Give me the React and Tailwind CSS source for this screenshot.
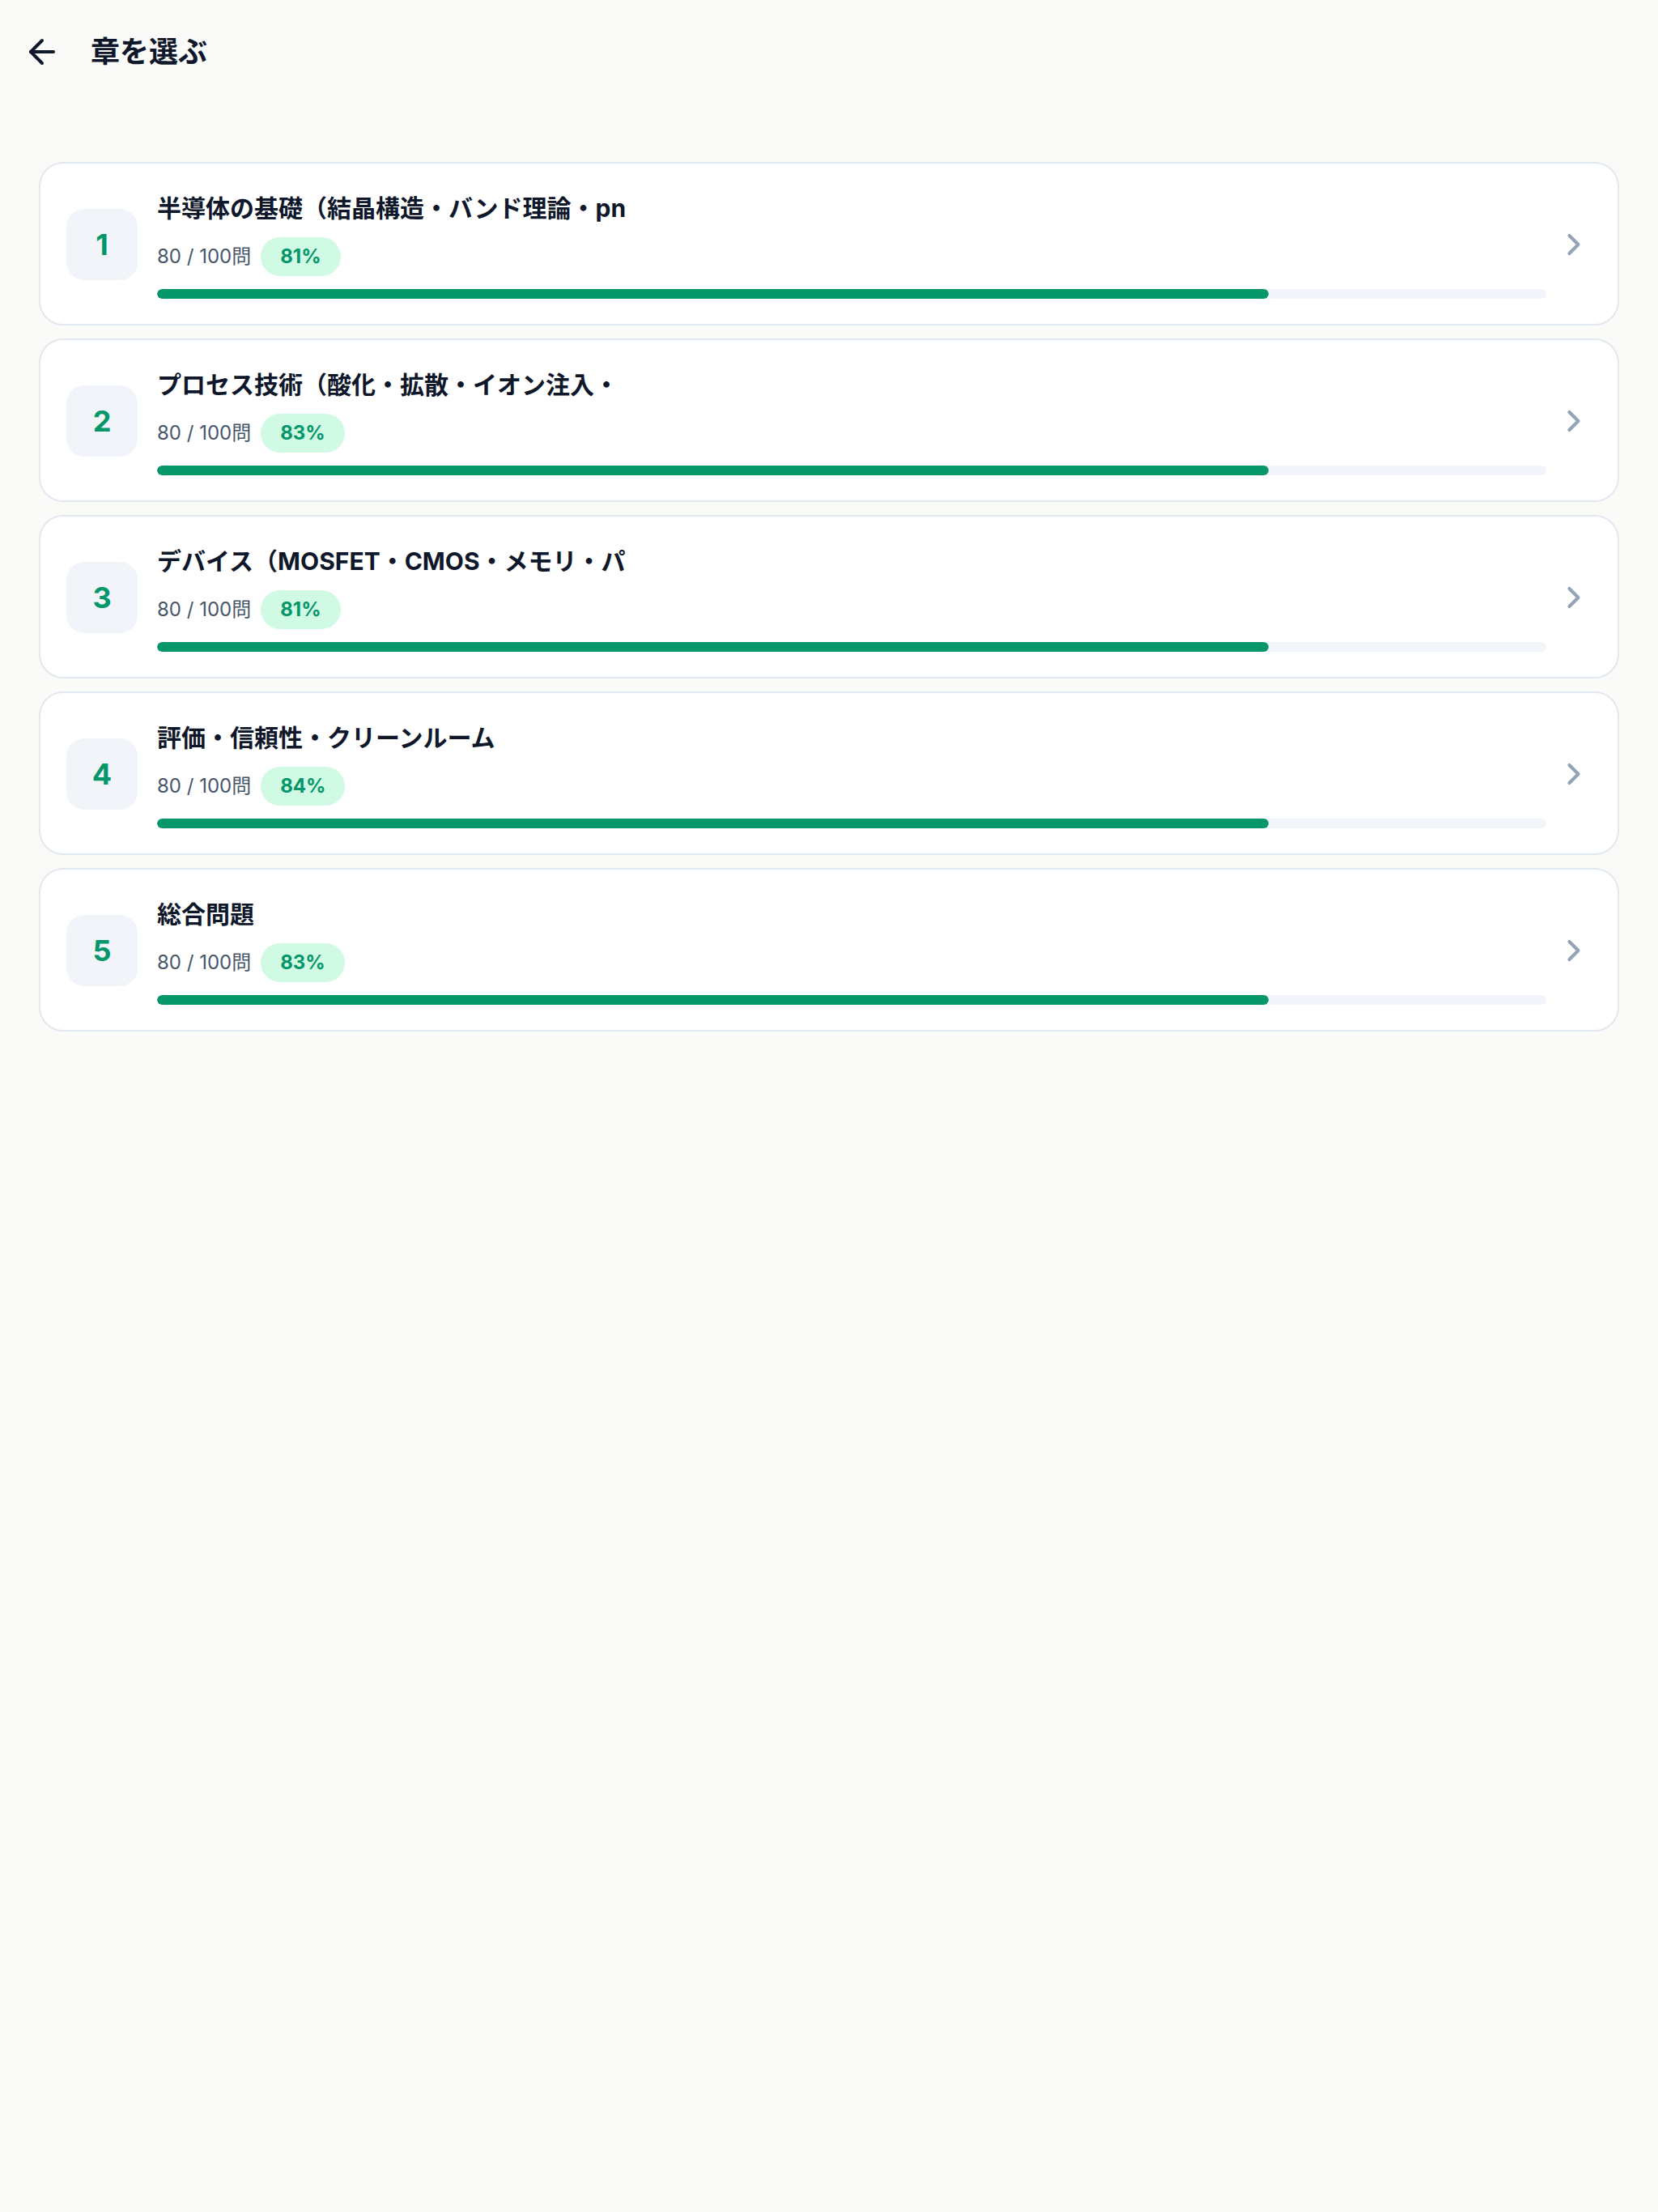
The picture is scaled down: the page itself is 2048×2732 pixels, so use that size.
import { ArrowLeft, ChevronRight } from "lucide-react";

const chapters = [
  { no: 1, title: "半導体の基礎（結晶構造・バンド理論・pn", done: 80, total: 100, rate: 81 },
  { no: 2, title: "プロセス技術（酸化・拡散・イオン注入・", done: 80, total: 100, rate: 83 },
  { no: 3, title: "デバイス（MOSFET・CMOS・メモリ・パ", done: 80, total: 100, rate: 81 },
  { no: 4, title: "評価・信頼性・クリーンルーム", done: 80, total: 100, rate: 84 },
  { no: 5, title: "総合問題", done: 80, total: 100, rate: 83 },
];

function ChapterCard({ chapter }) {
  const progress = (chapter.done / chapter.total) * 100;

  return (
    <button className="w-full h-[202px] flex items-center bg-white border-2 border-[#e2e8f0] rounded-[30px] px-[32px] pt-[33px] pb-[31px] text-left">
      <div className="w-[88px] h-[88px] shrink-0 rounded-[22px] bg-[#f1f5f9] flex items-center justify-center text-[36px] font-bold text-[#059669]">
        {chapter.no}
      </div>

      <div className="flex-1 min-w-0 ml-[24px] flex flex-col">
        <div className="h-[44px] leading-[44px] text-[30px] font-bold text-[#0f172a] whitespace-nowrap overflow-hidden">
          {chapter.title}
        </div>
        <div className="mt-[14px] h-[48px] flex items-center gap-[12px]">
          <span className="text-[24px] text-[#475569]">
            {chapter.done} / {chapter.total}問
          </span>
          <span className="h-[48px] px-[24px] rounded-full bg-[#d1fae5] text-[24px] font-bold text-[#059669] flex items-center">
            {chapter.rate}%
          </span>
        </div>
        <div className="mt-[16px] h-[12px] rounded-full bg-[#f1f5f9] overflow-hidden">
          <div className="h-full rounded-full bg-[#059669]" style={{ width: `${progress}%` }} />
        </div>
      </div>

      <ChevronRight size={44} strokeWidth={2.25} className="shrink-0 ml-[12px] text-[#94a3b8]" />
    </button>
  );
}

export default function App() {
  return (
    <div
      className="w-[2048px] min-h-[2732px] bg-[#fafaf9]"
      style={{ fontFamily: 'Inter, "Noto Sans CJK JP", sans-serif' }}
    >
      <header className="h-[128px] flex items-center pl-[28px]">
        <button className="w-[48px] h-[48px] flex items-center justify-center text-[#0f172a]">
          <ArrowLeft size={48} strokeWidth={2} />
        </button>
        <h1 className="ml-[36px] text-[36px] font-bold text-[#0f172a]">章を選ぶ</h1>
      </header>

      <main className="px-[48px] pt-[72px] flex flex-col gap-[16px]">
        {chapters.map((c) => (
          <ChapterCard key={c.no} chapter={c} />
        ))}
      </main>
    </div>
  );
}
